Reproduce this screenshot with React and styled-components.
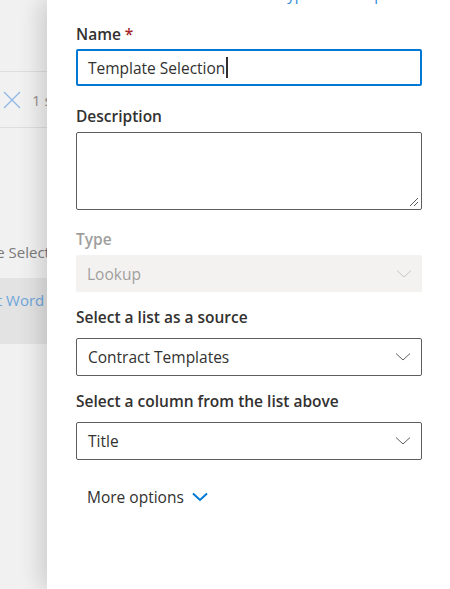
import React from 'react'
import styled, { createGlobalStyle } from 'styled-components'

const GlobalStyle = createGlobalStyle`
  html, body {
    margin: 0;
    padding: 0;
    height: 100%;
    overflow: hidden;
  }
  #root {
    height: 100%;
  }
  body {
    font-family: 'Open Sans', 'Noto Sans', sans-serif;
    background: #f4f4f4;
  }
`

const Screen = styled.div`
  display: flex;
  height: 589px;
  width: 450px;
  overflow: hidden;
`

const Backdrop = styled.div`
  width: 47px;
  flex-shrink: 0;
  display: flex;
  flex-direction: column;
  overflow: hidden;
  background: #f1f1f1;
`

const BackRow = styled.div`
  height: ${p => p.h}px;
  flex-shrink: 0;
  display: flex;
  align-items: center;
  gap: 11px;
  padding-left: ${p => p.pad || 0}px;
  border-bottom: ${p => (p.line ? '1px solid #dedede' : 'none')};
  background: ${p => p.bg || 'transparent'};
  white-space: nowrap;
  svg {
    flex-shrink: 0;
  }
`

const Clipped = styled.span`
  margin-left: ${p => p.shift}px;
  margin-top: ${p => p.raise || 0}px;
  font-size: 15px;
  color: ${p => p.color};
`

const Panel = styled.div`
  flex: 1;
  background: #fff;
  box-shadow: -6px 0 22px rgba(0, 0, 0, 0.16);
  padding: 0 28px 0 29px;
  display: flex;
  flex-direction: column;
  position: relative;
  z-index: 1;
`

const TopLink = styled.div`
  height: 4px;
  margin-top: -16px;
  padding-left: 203px;
  font-size: 15px;
  color: #2b88d8;
  white-space: nowrap;
`

const Field = styled.div`
  display: flex;
  flex-direction: column;
  margin-top: ${p => p.top}px;
`

const Label = styled.label`
  font-size: 15.5px;
  font-weight: 600;
  color: ${p => (p.disabled ? '#a19f9d' : '#323130')};
  line-height: 22px;
  margin-bottom: ${p => p.gap}px;
`

const Required = styled.span`
  color: #a4262c;
  margin-left: 4px;
`

const TextBox = styled.div`
  height: 37px;
  box-sizing: border-box;
  border: ${p => (p.focused ? '2px solid #0078d4' : '1px solid #605e5c')};
  border-radius: 2px;
  display: flex;
  align-items: center;
  padding-left: ${p => (p.focused ? 10 : 11)}px;
  font-size: 15.5px;
  color: #323130;
`

const Caret = styled.span`
  display: inline-block;
  width: 1.5px;
  height: 21px;
  background: #323130;
  margin-left: 1px;
`

const TextArea = styled.div`
  height: 78px;
  box-sizing: border-box;
  border: 1px solid #605e5c;
  border-radius: 2px;
  display: flex;
  justify-content: flex-end;
  align-items: flex-end;
  padding: 0 2px 2px 0;
`

const Select = styled.div`
  height: ${p => (p.disabled ? 37 : 38)}px;
  box-sizing: border-box;
  border: ${p => (p.disabled ? 'none' : '1px solid #605e5c')};
  background: ${p => (p.disabled ? '#f3f2f1' : '#fff')};
  border-radius: 2px;
  display: flex;
  align-items: center;
  justify-content: space-between;
  padding: 0 10px 0 11px;
  font-size: 15.5px;
  color: ${p => (p.disabled ? '#a19f9d' : '#323130')};
`

const MoreOptions = styled.div`
  display: flex;
  align-items: center;
  gap: 8px;
  margin-top: 26px;
  padding-left: 11px;
  font-size: 15.5px;
  color: #323130;
`

const Chevron = ({ color = '#605e5c', bold }) => (
  <svg width="16" height="10" viewBox="0 0 16 10">
    <path
      d="M1 1.5 L8 8 L15 1.5"
      fill="none"
      stroke={color}
      strokeWidth={bold ? 2 : 1}
    />
  </svg>
)

const Grip = () => (
  <svg width="10" height="10" viewBox="0 0 10 10">
    <path d="M9 1 L1 9 M9 5 L5 9" stroke="#605e5c" strokeWidth="1" />
  </svg>
)

const App = () => {
  return (
    <>
      <GlobalStyle />
      <Screen>
        <Backdrop>
          <BackRow h={71} line />
          <BackRow h={55} line pad={3}>
            <svg width="18" height="18" viewBox="0 0 18 18">
              <path d="M1 1 L17 17 M17 1 L1 17" stroke="#8fb8e6" strokeWidth="1.3" />
            </svg>
            <Clipped shift={0} color="#9a8f8c">1 selected</Clipped>
          </BackRow>
          <BackRow h={98} />
          <BackRow h={52}>
            <Clipped shift={-61} color="#7a7a7a">Template Selection</Clipped>
          </BackRow>
          <BackRow h={66} bg="#e3e3e3">
            <Clipped shift={-64} raise={-22} color="#6ea6dc">
              Microsoft Word - Template
            </Clipped>
          </BackRow>
        </Backdrop>
        <Panel>
          <TopLink>Type of a template</TopLink>
          <Field top={35}>
            <Label gap={4}>
              Name<Required>*</Required>
            </Label>
            <TextBox focused>
              Template Selection
              <Caret />
            </TextBox>
          </Field>
          <Field top={19}>
            <Label gap={5}>Description</Label>
            <TextArea>
              <Grip />
            </TextArea>
          </Field>
          <Field top={18}>
            <Label disabled gap={5}>Type</Label>
            <Select disabled>
              Lookup
              <Chevron color="#c8c6c4" />
            </Select>
          </Field>
          <Field top={14}>
            <Label gap={10}>Select a list as a source</Label>
            <Select>
              Contract Templates
              <Chevron />
            </Select>
          </Field>
          <Field top={14}>
            <Label gap={10}>Select a column from the list above</Label>
            <Select>
              Title
              <Chevron />
            </Select>
          </Field>
          <MoreOptions>
            More options
            <Chevron color="#0078d4" bold />
          </MoreOptions>
        </Panel>
      </Screen>
    </>
  )
}

export default App
